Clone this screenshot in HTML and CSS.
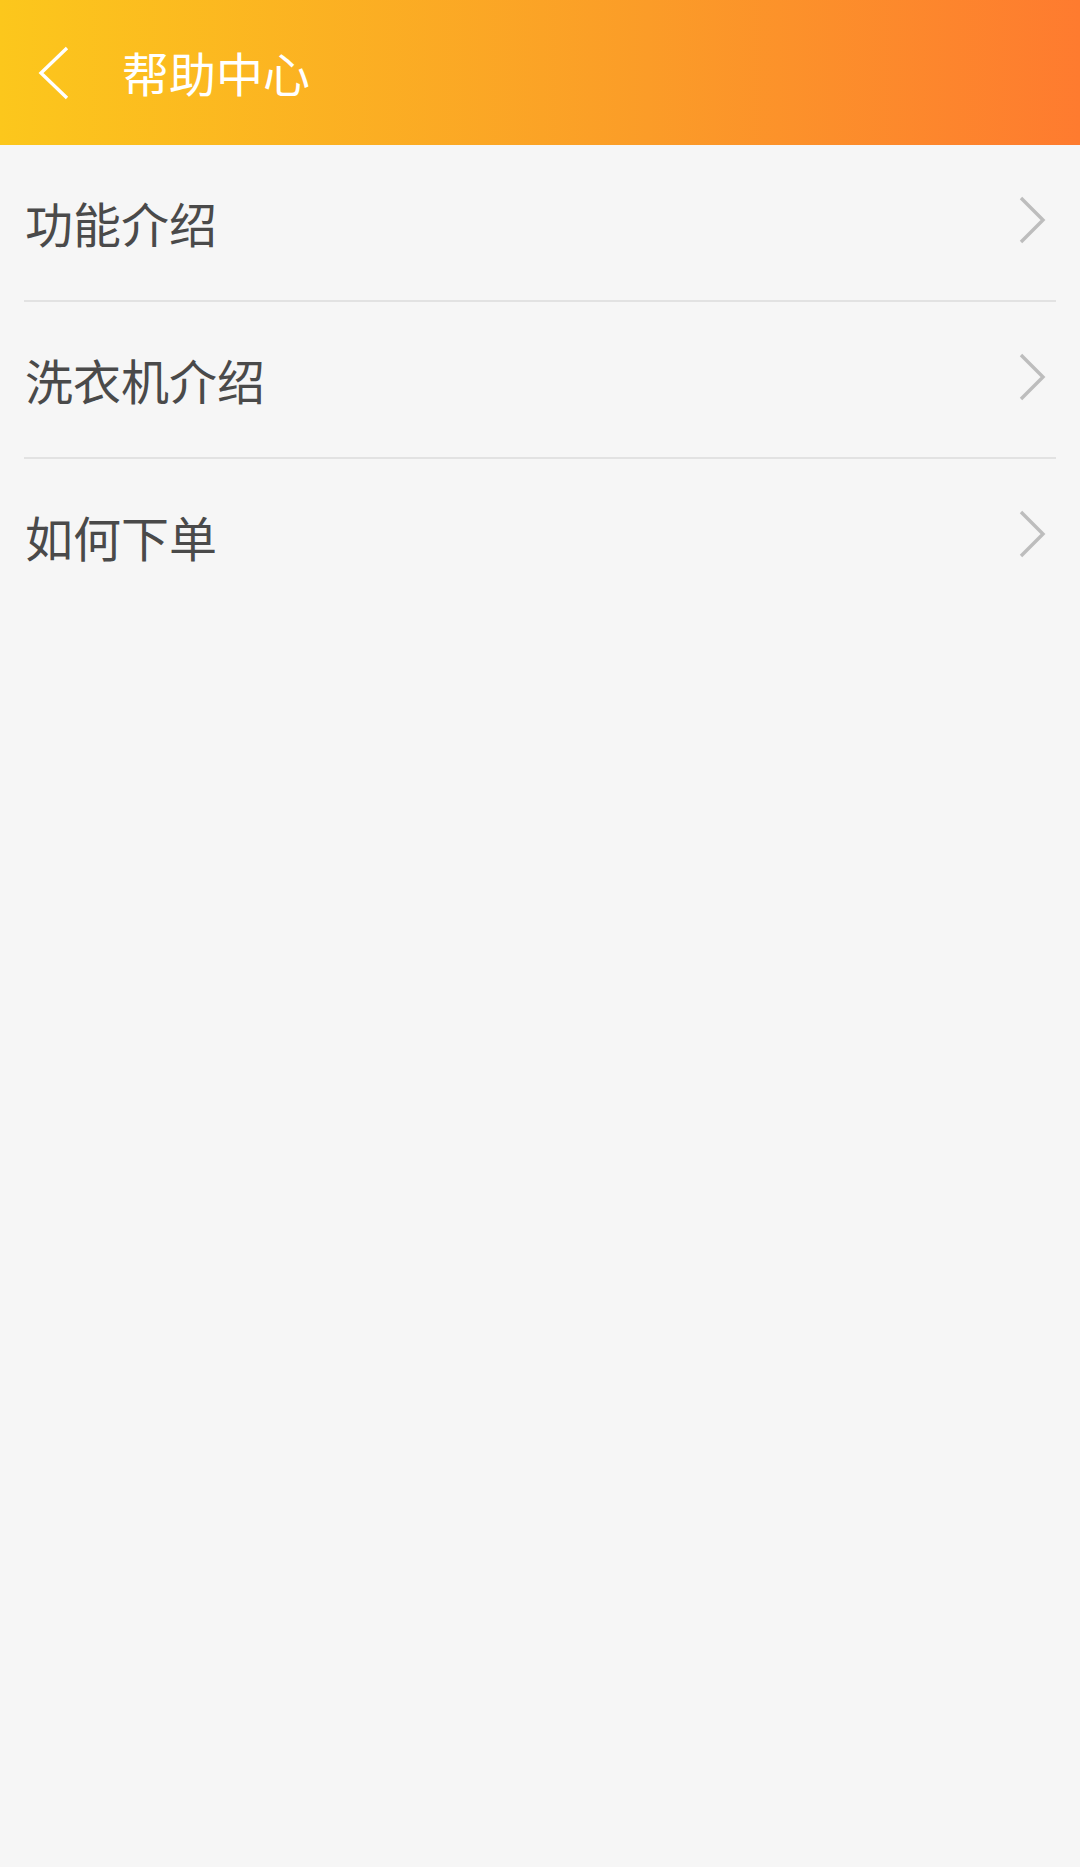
FILE: index.html
```html
<!DOCTYPE html>
<html>
<head>
	<meta charset="utf-8">
	<title>帮助中心</title>
	<link rel="stylesheet" href="styles.css">
</head>
<body>
<div class="header">
	<span class="back">
		<svg width="34" height="56" viewBox="0 0 34 56"><polyline points="30,3 4,28 30,53" fill="none" stroke="#fff" stroke-width="3.4"/></svg>
	</span>
	<h1 class="title">帮助中心</h1>
</div>
<ul class="list">
	<li><span>功能介绍</span><i class="arrow"><svg width="30" height="48" viewBox="0 0 30 48"><polyline points="4,2 26,24 4,46" fill="none" stroke="#bdbdbd" stroke-width="3.4"/></svg></i></li>
	<li><span>洗衣机介绍</span><i class="arrow"><svg width="30" height="48" viewBox="0 0 30 48"><polyline points="4,2 26,24 4,46" fill="none" stroke="#bdbdbd" stroke-width="3.4"/></svg></i></li>
	<li><span>如何下单</span><i class="arrow"><svg width="30" height="48" viewBox="0 0 30 48"><polyline points="4,2 26,24 4,46" fill="none" stroke="#bdbdbd" stroke-width="3.4"/></svg></i></li>
</ul>
</body>
</html>
```

FILE: styles.css
```css
*{
	margin:0;
	padding:0;
	list-style:none;
}
body{
	background:#f6f6f6;
	font-family:"Noto Sans CJK SC","Noto Sans",sans-serif;
}
.header{
	height:145px;
	display:flex;
	align-items:center;
	background:linear-gradient(90deg,#fcc71c,#fb9c28 60%,#fe7b2f);
}
.back{
	width:122px;
	display:flex;
	padding-left:37px;
	box-sizing:border-box;
}
.back svg{
	display:block;
}
.title{
	font-size:47px;
	font-weight:normal;
	color:#fff;
	line-height:1;
	margin-top:-2px;
}
.list{
	padding:0 24px;
}
.list li{
	height:155px;
	display:flex;
	align-items:center;
	justify-content:space-between;
	border-bottom:2px solid #e2e2e2;
	font-size:48px;
	color:#4a4a4a;
}
.list li:last-child{
	border-bottom:none;
}
.list li span{
	padding-left:1px;
	margin-top:-2px;
}
.arrow{
	display:flex;
	margin-right:9px;
	margin-top:-5px;
}
.arrow svg{
	display:block;
}
```
